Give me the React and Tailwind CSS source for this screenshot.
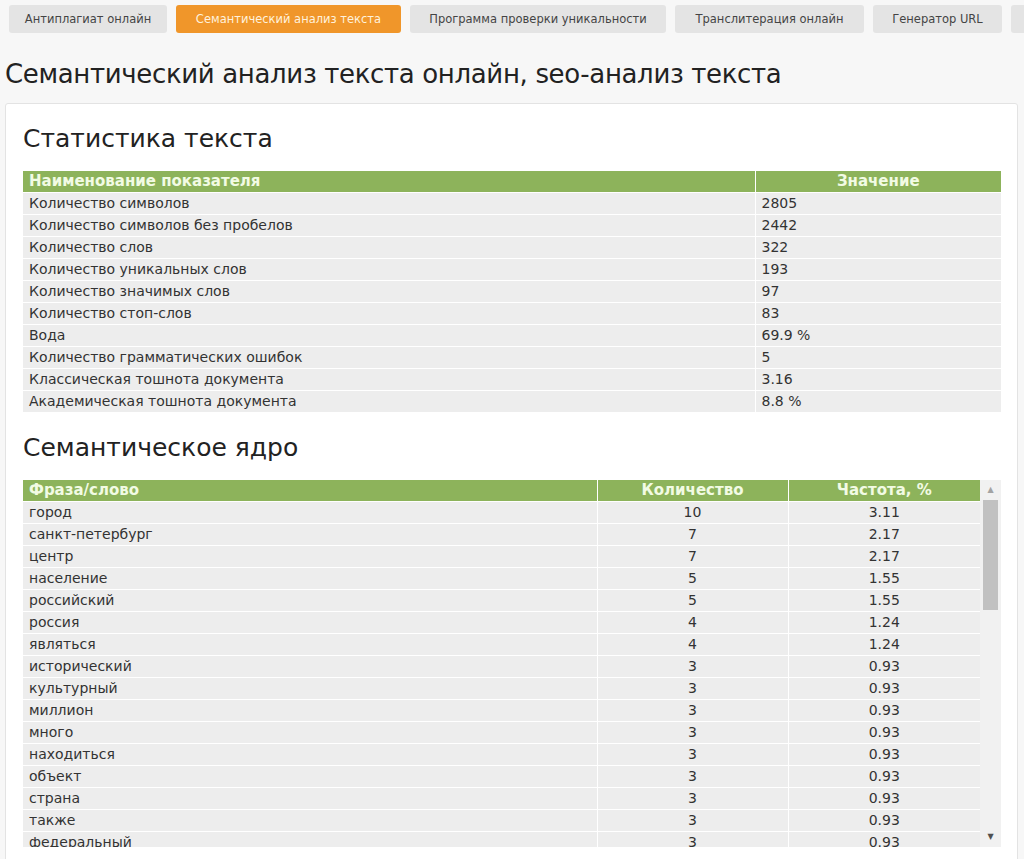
import React from "react";

const tabs = [
  { label: "Антиплагиат онлайн", w: "w-[158px]" },
  { label: "Семантический анализ текста", w: "w-[225px]", active: true },
  { label: "Программа проверки уникальности", w: "w-[256px]" },
  { label: "Транслитерация онлайн", w: "w-[189px]" },
  { label: "Генератор URL", w: "w-[129px]" },
  { label: "Проверка", w: "w-[220px]" },
];

const stats = [
  ["Количество символов", "2805"],
  ["Количество символов без пробелов", "2442"],
  ["Количество слов", "322"],
  ["Количество уникальных слов", "193"],
  ["Количество значимых слов", "97"],
  ["Количество стоп-слов", "83"],
  ["Вода", "69.9 %"],
  ["Количество грамматических ошибок", "5"],
  ["Классическая тошнота документа", "3.16"],
  ["Академическая тошнота документа", "8.8 %"],
];

const core = [
  ["город", "10", "3.11"],
  ["санкт-петербург", "7", "2.17"],
  ["центр", "7", "2.17"],
  ["население", "5", "1.55"],
  ["российский", "5", "1.55"],
  ["россия", "4", "1.24"],
  ["являться", "4", "1.24"],
  ["исторический", "3", "0.93"],
  ["культурный", "3", "0.93"],
  ["миллион", "3", "0.93"],
  ["много", "3", "0.93"],
  ["находиться", "3", "0.93"],
  ["объект", "3", "0.93"],
  ["страна", "3", "0.93"],
  ["также", "3", "0.93"],
  ["федеральный", "3", "0.93"],
  ["архитектурный", "2", "0.62"],
  ["большой", "2", "0.62"],
];

const App = () => {
  return (
    <div className="w-[1024px] h-[859px] overflow-hidden bg-[#f7f7f7] font-['DejaVu_Sans',sans-serif] text-[#333]">
      {/* Tabs */}
      <div className="flex gap-[9px] pl-[9px] pt-[5px] overflow-hidden whitespace-nowrap">
        {tabs.map((t) => (
          <div
            key={t.label}
            className={`${t.w} shrink-0 h-[28px] pt-[2px] flex items-center justify-center rounded-[3px] text-[11.5px] ${
              t.active ? "bg-[#f0962a] text-[#fff1dc]" : "bg-[#e4e4e4] text-[#444]"
            }`}
          >
            {t.label}
          </div>
        ))}
      </div>

      <h1 className="pl-[5px] mt-[26px] text-[26px] leading-[30px] text-[#222] tracking-[-0.35px]">
        Семантический анализ текста онлайн, seo-анализ текста
      </h1>

      {/* Panel */}
      <div className="ml-[5px] mt-[14px] w-[1013px] h-[800px] bg-white border border-[#e3e3e3] rounded-[3px] pl-[17px] pr-[16px]">
        <h2 className="mt-[20px] text-[25px] leading-[30px] text-[#222]">Статистика текста</h2>

        <table className="mt-[17px] w-[978px] border-collapse text-[14px] leading-[21px]">
          <thead>
            <tr className="bg-[#8db35b] text-[#f2fbe4] text-[15px]">
              <th className="text-left pl-[6px] w-[732px] border-r border-white font-bold">Наименование показателя</th>
              <th className="text-center font-bold">Значение</th>
            </tr>
          </thead>
          <tbody>
            {stats.map(([k, v]) => (
              <tr key={k} className="bg-[#ededed] border-t border-white">
                <td className="pl-[6px] border-r border-white">{k}</td>
                <td className="pl-[6px]">{v}</td>
              </tr>
            ))}
          </tbody>
        </table>

        <h2 className="mt-[21px] text-[25px] leading-[30px] text-[#222]">Семантическое ядро</h2>

        <div className="mt-[17px] flex w-[978px] h-[367px]">
          <div className="w-[957px] overflow-hidden">
            <table className="w-[957px] border-collapse text-[14px] leading-[21px]">
              <thead>
                <tr className="bg-[#8db35b] text-[#f2fbe4] text-[15px]">
                  <th className="text-left pl-[6px] w-[574px] border-r border-white font-bold">Фраза/слово</th>
                  <th className="text-center w-[191px] border-r border-white font-bold">Количество</th>
                  <th className="text-center font-bold">Частота, %</th>
                </tr>
              </thead>
              <tbody>
                {core.map(([w, c, f]) => (
                  <tr key={w} className="bg-[#ededed] border-t border-white">
                    <td className="pl-[6px] border-r border-white">{w}</td>
                    <td className="text-center border-r border-white">{c}</td>
                    <td className="text-center">{f}</td>
                  </tr>
                ))}
              </tbody>
            </table>
          </div>
          {/* Scrollbar */}
          <div className="w-[21px] flex flex-col items-center bg-[#f1f1f1]">
            <div className="h-[20px] flex items-center justify-center text-[8px] text-[#a3a3a3]">▲</div>
            <div className="flex-1 w-full px-[3px]">
              <div className="h-[110px] bg-[#c1c1c1]" />
            </div>
            <div className="h-[20px] flex items-center justify-center text-[8px] text-[#505050]">▼</div>
          </div>
        </div>
      </div>
    </div>
  );
};

export default App;
